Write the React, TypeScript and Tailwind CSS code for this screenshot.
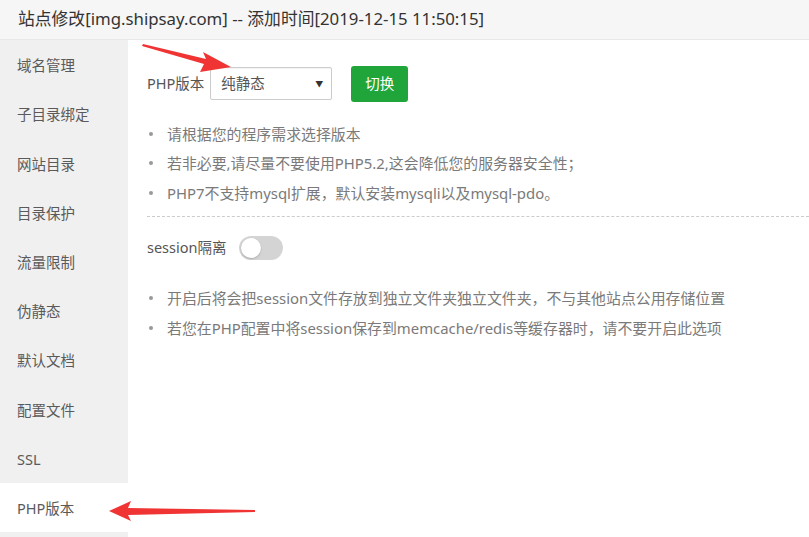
import React from "react";

const FONT = { fontFamily: '"Noto Sans","Noto Sans CJK SC",sans-serif' };

const menu = ["域名管理", "子目录绑定", "网站目录", "目录保护", "流量限制", "伪静态", "默认文档", "配置文件", "SSL", "PHP版本"];

function Bullet({ children }: { children: React.ReactNode }) {
  return (
    <li className="flex items-center h-[29.5px]">
      <span className="w-[4px] h-[4px] rounded-full bg-[#999] mr-[14px] ml-[2px]" />
      <span>{children}</span>
    </li>
  );
}

export default function App() {
  return (
    <div className="relative w-[809px] h-[537px] overflow-hidden bg-white" style={FONT}>
      <div className="h-[40px] bg-[#f6f6f6] border-b border-[#e8e8e8] flex items-center pl-[18px] text-[16.8px] text-[#333] leading-none">
        站点修改[img.shipsay.com] -- 添加时间[2019-12-15 11:50:15]
      </div>
      <div className="flex h-[497px]">
        <div className="w-[128px] bg-[#f0f0f0] flex flex-col">
          {menu.map((m, i) => (
            <div
              key={m}
              className={
                "h-[49.2px] flex items-center pl-[17px] pt-[3px] text-[14.5px] text-[#5a5a5a] " +
                (i === 9 ? "bg-white" : "")
              }
            >
              {m}
            </div>
          ))}
        </div>
        <div className="flex-1 pl-[19px] pt-[25px]">
          <div className="flex items-center h-[37px]">
            <span className="text-[14.5px] text-[#555] mr-[6px]">PHP版本</span>
            <div className="w-[122px] h-[33px] border border-[#ccc] rounded-[2px] flex items-center justify-between pl-[10px] pr-[8px] text-[14.5px] text-[#555] shadow-[inset_0_1px_1px_rgba(0,0,0,0.05)]">
              <span>纯静态</span>
              <span className="text-[8px] text-[#333]">▼</span>
            </div>
            <button className="ml-[19px] w-[57px] h-[36px] rounded-[3px] bg-[#20a53a] text-white text-[14.5px] flex items-center justify-center">
              切换
            </button>
          </div>
          <ul className="mt-[17px] text-[14.9px] text-[#7a7a7a]">
            <Bullet>请根据您的程序需求选择版本</Bullet>
            <Bullet>若非必要,请尽量不要使用PHP5.2,这会降低您的服务器安全性；</Bullet>
            <Bullet>PHP7不支持mysql扩展，默认安装mysqli以及mysql-pdo。</Bullet>
          </ul>
          <div className="mt-[8px] border-t border-dashed border-[#ccc]" />
          <div className="flex items-center mt-[18px] h-[26px]">
            <span className="text-[14.5px] text-[#555] mr-[12px]">session隔离</span>
            <div className="w-[44px] h-[24px] rounded-full bg-[#d4d4d4] p-[2px] flex items-center">
              <div className="w-[20px] h-[20px] rounded-full bg-white shadow-[0_1px_2px_rgba(0,0,0,0.2)]" />
            </div>
          </div>
          <ul className="mt-[23px] text-[14.9px] text-[#7a7a7a]">
            <Bullet>开启后将会把session文件存放到独立文件夹独立文件夹，不与其他站点公用存储位置</Bullet>
            <Bullet>若您在PHP配置中将session保存到memcache/redis等缓存器时，请不要开启此选项</Bullet>
          </ul>
        </div>
      </div>
      <svg className="absolute left-0 top-0 pointer-events-none" width="809" height="537">
        <polygon points="143,44 206,59 203,52 231,67 200,72 204,64 142,46" fill="#f03434" />
        <polygon points="109,511 131,501 128,508 255,510 255,512 128,515 131,521" fill="#f03434" />
      </svg>
    </div>
  );
}
